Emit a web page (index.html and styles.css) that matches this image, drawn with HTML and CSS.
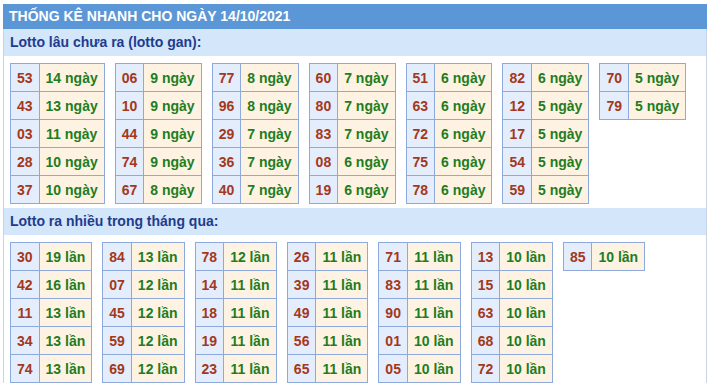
FILE: index.html
```html
<!DOCTYPE html>
<html lang="vi">
<head>
<meta charset="utf-8">
<title>Thống kê nhanh</title>
<link rel="stylesheet" href="styles.css">
</head>
<body>
<div class="box">
  <div class="title">THỐNG KÊ NHANH CHO NGÀY 14/10/2021</div>
  <div class="sub">Lotto lâu chưa ra (lotto gan):</div>
  <div class="grid">
    <table class="t"><tr><td class="n">53</td><td class="v">14 ngày</td></tr><tr><td class="n">43</td><td class="v">13 ngày</td></tr><tr><td class="n">03</td><td class="v">11 ngày</td></tr><tr><td class="n">28</td><td class="v">10 ngày</td></tr><tr><td class="n">37</td><td class="v">10 ngày</td></tr></table>
    <table class="t"><tr><td class="n">06</td><td class="v">9 ngày</td></tr><tr><td class="n">10</td><td class="v">9 ngày</td></tr><tr><td class="n">44</td><td class="v">9 ngày</td></tr><tr><td class="n">74</td><td class="v">9 ngày</td></tr><tr><td class="n">67</td><td class="v">8 ngày</td></tr></table>
    <table class="t"><tr><td class="n">77</td><td class="v">8 ngày</td></tr><tr><td class="n">96</td><td class="v">8 ngày</td></tr><tr><td class="n">29</td><td class="v">7 ngày</td></tr><tr><td class="n">36</td><td class="v">7 ngày</td></tr><tr><td class="n">40</td><td class="v">7 ngày</td></tr></table>
    <table class="t"><tr><td class="n">60</td><td class="v">7 ngày</td></tr><tr><td class="n">80</td><td class="v">7 ngày</td></tr><tr><td class="n">83</td><td class="v">7 ngày</td></tr><tr><td class="n">08</td><td class="v">6 ngày</td></tr><tr><td class="n">19</td><td class="v">6 ngày</td></tr></table>
    <table class="t"><tr><td class="n">51</td><td class="v">6 ngày</td></tr><tr><td class="n">63</td><td class="v">6 ngày</td></tr><tr><td class="n">72</td><td class="v">6 ngày</td></tr><tr><td class="n">75</td><td class="v">6 ngày</td></tr><tr><td class="n">78</td><td class="v">6 ngày</td></tr></table>
    <table class="t"><tr><td class="n">82</td><td class="v">6 ngày</td></tr><tr><td class="n">12</td><td class="v">5 ngày</td></tr><tr><td class="n">17</td><td class="v">5 ngày</td></tr><tr><td class="n">54</td><td class="v">5 ngày</td></tr><tr><td class="n">59</td><td class="v">5 ngày</td></tr></table>
    <table class="t"><tr><td class="n">70</td><td class="v">5 ngày</td></tr><tr><td class="n">79</td><td class="v">5 ngày</td></tr></table>
  </div>
  <div class="sub">Lotto ra nhiều trong tháng qua:</div>
  <div class="grid">
    <table class="t"><tr><td class="n">30</td><td class="v">19 lần</td></tr><tr><td class="n">42</td><td class="v">16 lần</td></tr><tr><td class="n">11</td><td class="v">13 lần</td></tr><tr><td class="n">34</td><td class="v">13 lần</td></tr><tr><td class="n">74</td><td class="v">13 lần</td></tr></table>
    <table class="t"><tr><td class="n">84</td><td class="v">13 lần</td></tr><tr><td class="n">07</td><td class="v">12 lần</td></tr><tr><td class="n">45</td><td class="v">12 lần</td></tr><tr><td class="n">59</td><td class="v">12 lần</td></tr><tr><td class="n">69</td><td class="v">12 lần</td></tr></table>
    <table class="t"><tr><td class="n">78</td><td class="v">12 lần</td></tr><tr><td class="n">14</td><td class="v">11 lần</td></tr><tr><td class="n">18</td><td class="v">11 lần</td></tr><tr><td class="n">19</td><td class="v">11 lần</td></tr><tr><td class="n">23</td><td class="v">11 lần</td></tr></table>
    <table class="t"><tr><td class="n">26</td><td class="v">11 lần</td></tr><tr><td class="n">39</td><td class="v">11 lần</td></tr><tr><td class="n">49</td><td class="v">11 lần</td></tr><tr><td class="n">56</td><td class="v">11 lần</td></tr><tr><td class="n">65</td><td class="v">11 lần</td></tr></table>
    <table class="t"><tr><td class="n">71</td><td class="v">11 lần</td></tr><tr><td class="n">83</td><td class="v">11 lần</td></tr><tr><td class="n">90</td><td class="v">11 lần</td></tr><tr><td class="n">01</td><td class="v">10 lần</td></tr><tr><td class="n">05</td><td class="v">10 lần</td></tr></table>
    <table class="t"><tr><td class="n">13</td><td class="v">10 lần</td></tr><tr><td class="n">15</td><td class="v">10 lần</td></tr><tr><td class="n">63</td><td class="v">10 lần</td></tr><tr><td class="n">68</td><td class="v">10 lần</td></tr><tr><td class="n">72</td><td class="v">10 lần</td></tr></table>
    <table class="t"><tr><td class="n">85</td><td class="v">10 lần</td></tr></table>
  </div>
</div>
</body>
</html>
```
FILE: styles.css
```css
html, body {
  margin: 0;
  padding: 0;
  background: #ffffff;
}
body {
  font-family: "Liberation Sans", Arial, sans-serif;
  font-size: 14px;
  font-weight: bold;
}
.box {
  margin: 4px 3px 0 3px;
  border-left: 1px solid #c8d4e6;
  border-right: 1px solid #c8d4e6;
}
.title {
  height: 25px;
  line-height: 25px;
  background: #5b97d6;
  color: #ffffff;
  margin-left: -1px;
  margin-right: -1px;
  padding-left: 6px;
}
.sub {
  height: 27px;
  line-height: 27px;
  background: #d4e6f9;
  color: #1e3c8e;
  padding-left: 6px;
}
.grid {
  display: flex;
  flex-wrap: wrap;
  align-items: flex-start;
  gap: 10px;
  padding: 7px 6px 4px 6px;
}
.t {
  border-collapse: collapse;
}
.t td {
  border: 1px solid #8eaadc;
  height: 27px;
  padding: 0 6px;
  text-align: center;
  line-height: 16px;
  white-space: nowrap;
}
.t td.n {
  background: #e3edfb;
  color: #a3381c;
}
.t td.v {
  background: #fef3e2;
  color: #1e7d1e;
}
```
